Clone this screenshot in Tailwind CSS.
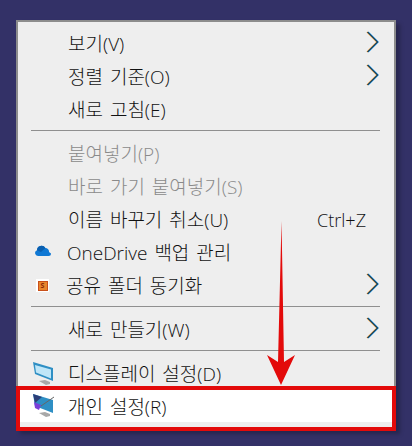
<!DOCTYPE html>
<html lang="ko">

<head>
    <meta charset="UTF-8" />
    <meta name="viewport" content="width=device-width, initial-scale=1.0" />
    <script src="https://cdn.jsdelivr.net/npm/@tailwindcss/browser@4"></script>
    <title>Context menu</title>
</head>

<body class="bg-[#333167] h-[446px] w-[412px] overflow-hidden relative font-['Open_Sans','Noto_Sans_CJK_KR',sans-serif] text-[19px] font-light text-[#111111] [word-spacing:2px]">
    <!-- menu box -->
    <div class="absolute left-[16px] top-[20px] w-[380px] h-[410px] bg-[#eeeeee] border-2 border-[#8c8c8c] shadow-[4px_4px_4px_rgba(0,0,0,0.25)] pt-[5px]">
        <div class="h-[33px] flex items-center justify-between pl-[50px] pr-[15px]">
            <span class="mt-[2px]">보기(V)</span>
            <svg width="13" height="22" viewBox="0 0 13 22" fill="none" class="mb-[3px]">
                <path d="M1 1l10 10L1 21" stroke="#f0a040" stroke-width="1.500" />
                <path d="M2 1l10 10L2 21" stroke="#1a90e0" stroke-width="1.500" />
                <path d="M1.500 1l10 10-10 10" stroke="#111111" stroke-width="1" />
            </svg>
        </div>
        <div class="h-[33px] flex items-center justify-between pl-[50px] pr-[15px]">
            <span class="mt-[2px]">정렬 기준(O)</span>
            <svg width="13" height="22" viewBox="0 0 13 22" fill="none" class="mb-[3px]">
                <path d="M1 1l10 10L1 21" stroke="#f0a040" stroke-width="1.500" />
                <path d="M2 1l10 10L2 21" stroke="#1a90e0" stroke-width="1.500" />
                <path d="M1.500 1l10 10-10 10" stroke="#111111" stroke-width="1" />
            </svg>
        </div>
        <div class="h-[33px] flex items-center pl-[50px]"><span class="mt-[2px]">새로 고침(E)</span></div>

        <div class="h-[11px] pt-[4px] pl-[13px] pr-[14px]"><div class="h-[1px] w-full bg-[#8f8f8f]"></div></div>

        <div class="h-[33px] flex items-center pl-[50px] text-[#8a8a8a]"><span class="mt-[2px]">붙여넣기(P)</span></div>
        <div class="h-[33px] flex items-center pl-[50px] text-[#8a8a8a]"><span class="mt-[2px]">바로 가기 붙여넣기(S)</span></div>
        <div class="h-[33px] flex items-center justify-between pl-[50px] pr-[28px]">
            <span class="mt-[2px]">이름 바꾸기 취소(U)</span>
            <span class="mt-[2px] text-[18px]">Ctrl+Z</span>
        </div>
        <div class="h-[33px] flex items-center pl-[17px]">
            <svg width="16" height="11" viewBox="0 0 16 11" class="mr-[16px] mb-[4px]">
                <path d="M3 11a3 3 0 0 1-1-5.800A4.500 4.500 0 0 1 10.400 3 3.600 3.600 0 0 1 14 7l2 1.500A2.500 2.500 0 0 1 13.500 11z" fill="#0f78d4" />
                <path d="M2 5.200A4.500 4.500 0 0 1 10.400 3L6 7z" fill="#0a5fb0" />
            </svg>
            <span class="mt-[2px]">OneDrive 백업 관리</span>
        </div>
        <div class="h-[33px] flex items-center justify-between pr-[15px]">
            <div class="flex items-center pl-[18px]">
                <div class="w-[13px] h-[13px] bg-white flex items-center justify-center mr-[17px]">
                    <div class="w-[10px] h-[10px] bg-[#e8862e] border border-[#c8501a] text-[7px] leading-none font-bold text-[#8a2a08] flex items-center justify-center">S</div>
                </div>
                <span class="mt-[2px]">공유 폴더 동기화</span>
            </div>
            <svg width="13" height="22" viewBox="0 0 13 22" fill="none" class="mb-[3px]">
                <path d="M1 1l10 10L1 21" stroke="#f0a040" stroke-width="1.500" />
                <path d="M2 1l10 10L2 21" stroke="#1a90e0" stroke-width="1.500" />
                <path d="M1.500 1l10 10-10 10" stroke="#111111" stroke-width="1" />
            </svg>
        </div>

        <div class="h-[11px] pt-[4px] pl-[13px] pr-[14px]"><div class="h-[1px] w-full bg-[#8f8f8f]"></div></div>

        <div class="h-[33px] flex items-center justify-between pl-[50px] pr-[15px]">
            <span class="mt-[2px]">새로 만들기(W)</span>
            <svg width="13" height="22" viewBox="0 0 13 22" fill="none" class="mb-[3px]">
                <path d="M1 1l10 10L1 21" stroke="#f0a040" stroke-width="1.500" />
                <path d="M2 1l10 10L2 21" stroke="#1a90e0" stroke-width="1.500" />
                <path d="M1.500 1l10 10-10 10" stroke="#111111" stroke-width="1" />
            </svg>
        </div>

        <div class="h-[11px] pt-[4px] pl-[13px] pr-[14px]"><div class="h-[1px] w-full bg-[#8f8f8f]"></div></div>

        <div class="h-[33px] flex items-center pl-[15px]">
            <svg width="21" height="23" viewBox="0 0 21 23" class="mr-[14px] mb-[1px]">
                <path d="M0 0l20 6v13L2 12z" fill="#2f8fc4" />
                <path d="M2 3l16 4.500v9L3 10.500z" fill="#bfe6f8" />
                <path d="M6 19l6-1 5 2v2l-4 1z" fill="#a8a8a8" />
            </svg>
            <span class="mt-[2px]">디스플레이 설정(D)</span>
        </div>
        <!-- highlighted row, sits above the red box -->
        <div class="relative z-10 h-[33px] flex items-center pl-[15px]">
            <svg width="21" height="23" viewBox="0 0 21 23" class="mr-[14px] mb-[2px]">
                <path d="M0 0l20 6v13L2 12z" fill="#2f8fc4" />
                <path d="M0 0l9 3-7 6z" fill="#2c3e78" />
                <path d="M1 8l7 3-2 5-4-2z" fill="#7a3fd8" />
                <path d="M6 19l6-1 5 2v2l-4 1z" fill="#a8a8a8" />
                <path d="M8 12L21 3" stroke="#666666" stroke-width="1" />
            </svg>
            <span class="mt-[2px]">개인 설정(R)</span>
        </div>
    </div>

    <!-- red highlight box -->
    <div class="absolute left-[16px] top-[386px] w-[380px] h-[45px] border-[4px] border-[#e30a0a] bg-white">
        <div class="w-full h-[32px]"></div>
        <div class="w-full h-[5px] bg-[#eeeeee]"></div>
    </div>

    <!-- red arrow -->
    <svg class="absolute left-[266px] top-[220px] z-20" width="30" height="166" viewBox="0 0 30 166">
        <path d="M15.500 1L18 142l11-7-14 30L1 135l11 7z" fill="#e30a0a" />
    </svg>
</body>

</html>
